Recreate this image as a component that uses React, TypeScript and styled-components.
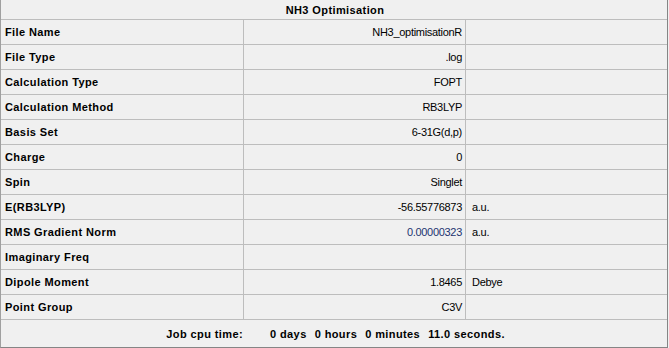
import styled, { createGlobalStyle } from "styled-components";

const GlobalStyle = createGlobalStyle`
  html, body {
    margin: 0;
    padding: 0;
    background: #f0f0f0;
  }
  body {
    font-family: "Liberation Sans", Arial, sans-serif;
    font-size: 11px;
    color: #000;
  }
`;

type Row = {
  label: string;
  value: string;
  unit?: string;
  highlight?: boolean;
};

const rows: Row[] = [
  { label: "File Name", value: "NH3_optimisationR" },
  { label: "File Type", value: ".log" },
  { label: "Calculation Type", value: "FOPT" },
  { label: "Calculation Method", value: "RB3LYP" },
  { label: "Basis Set", value: "6-31G(d,p)" },
  { label: "Charge", value: "0" },
  { label: "Spin", value: "Singlet" },
  { label: "E(RB3LYP)", value: "-56.55776873", unit: "a.u." },
  { label: "RMS Gradient Norm", value: "0.00000323", unit: "a.u.", highlight: true },
  { label: "Imaginary Freq", value: "" },
  { label: "Dipole Moment", value: "1.8465", unit: "Debye" },
  { label: "Point Group", value: "C3V" },
];

const Panel = styled.div`
  width: 668px;
  height: 348px;
  box-sizing: border-box;
  background: #f0f0f0;
  border-left: 1px solid #a0a0a0;
  border-right: 1px solid #858585;
  border-bottom: 1px solid #858585;
  display: flex;
  flex-direction: column;
`;

const Title = styled.div`
  height: 20px;
  box-sizing: border-box;
  border-bottom: 1px solid #bdbdbd;
  display: flex;
  align-items: center;
  justify-content: center;
  font-weight: bold;
  letter-spacing: 0.4px;
  padding-left: 2px;
`;

const PropRow = styled.div`
  height: 25px;
  box-sizing: border-box;
  border-bottom: 1px solid #bdbdbd;
  display: flex;
`;

const Cell = styled.div<{ $width?: number; $align?: "left" | "right"; $bold?: boolean }>`
  ${(p) => (p.$width ? `width: ${p.$width}px;` : "flex: 1;")}
  box-sizing: border-box;
  display: flex;
  align-items: center;
  justify-content: ${(p) => (p.$align === "right" ? "flex-end" : "flex-start")};
  font-weight: ${(p) => (p.$bold ? "bold" : "normal")};
  letter-spacing: ${(p) => (p.$bold ? "0.4px" : "-0.3px")};
  border-right: ${(p) => (p.$width ? "1px solid #bdbdbd" : "none")};
  padding: ${(p) => (p.$align === "right" ? "0 3px 0 0" : p.$bold ? "0 0 0 4px" : "0 0 0 6px")};
  white-space: nowrap;
`;

const Value = styled.span<{ $highlight?: boolean }>`
  color: ${(p) => (p.$highlight ? "#1d3470" : "#000")};
`;

const Footer = styled.div`
  flex: 1;
  display: flex;
  align-items: center;
  font-weight: bold;
  letter-spacing: 0.4px;
  white-space: nowrap;
`;

const FooterLabel = styled.div`
  width: 242px;
  text-align: right;
`;

const TimeParts = styled.div`
  display: flex;
  gap: 8px;
  margin-left: 27px;
`;

export default function App() {
  return (
    <>
      <GlobalStyle />
      <Panel>
        <Title>NH3 Optimisation</Title>
        {rows.map((r) => (
          <PropRow key={r.label}>
            <Cell $width={243} $bold>
              {r.label}
            </Cell>
            <Cell $width={222} $align="right">
              <Value $highlight={r.highlight}>{r.value}</Value>
            </Cell>
            <Cell>{r.unit}</Cell>
          </PropRow>
        ))}
        <Footer>
          <FooterLabel>Job cpu time:</FooterLabel>
          <TimeParts>
            <span>0 days</span>
            <span>0 hours</span>
            <span>0 minutes</span>
            <span>11.0 seconds.</span>
          </TimeParts>
        </Footer>
      </Panel>
    </>
  );
}
